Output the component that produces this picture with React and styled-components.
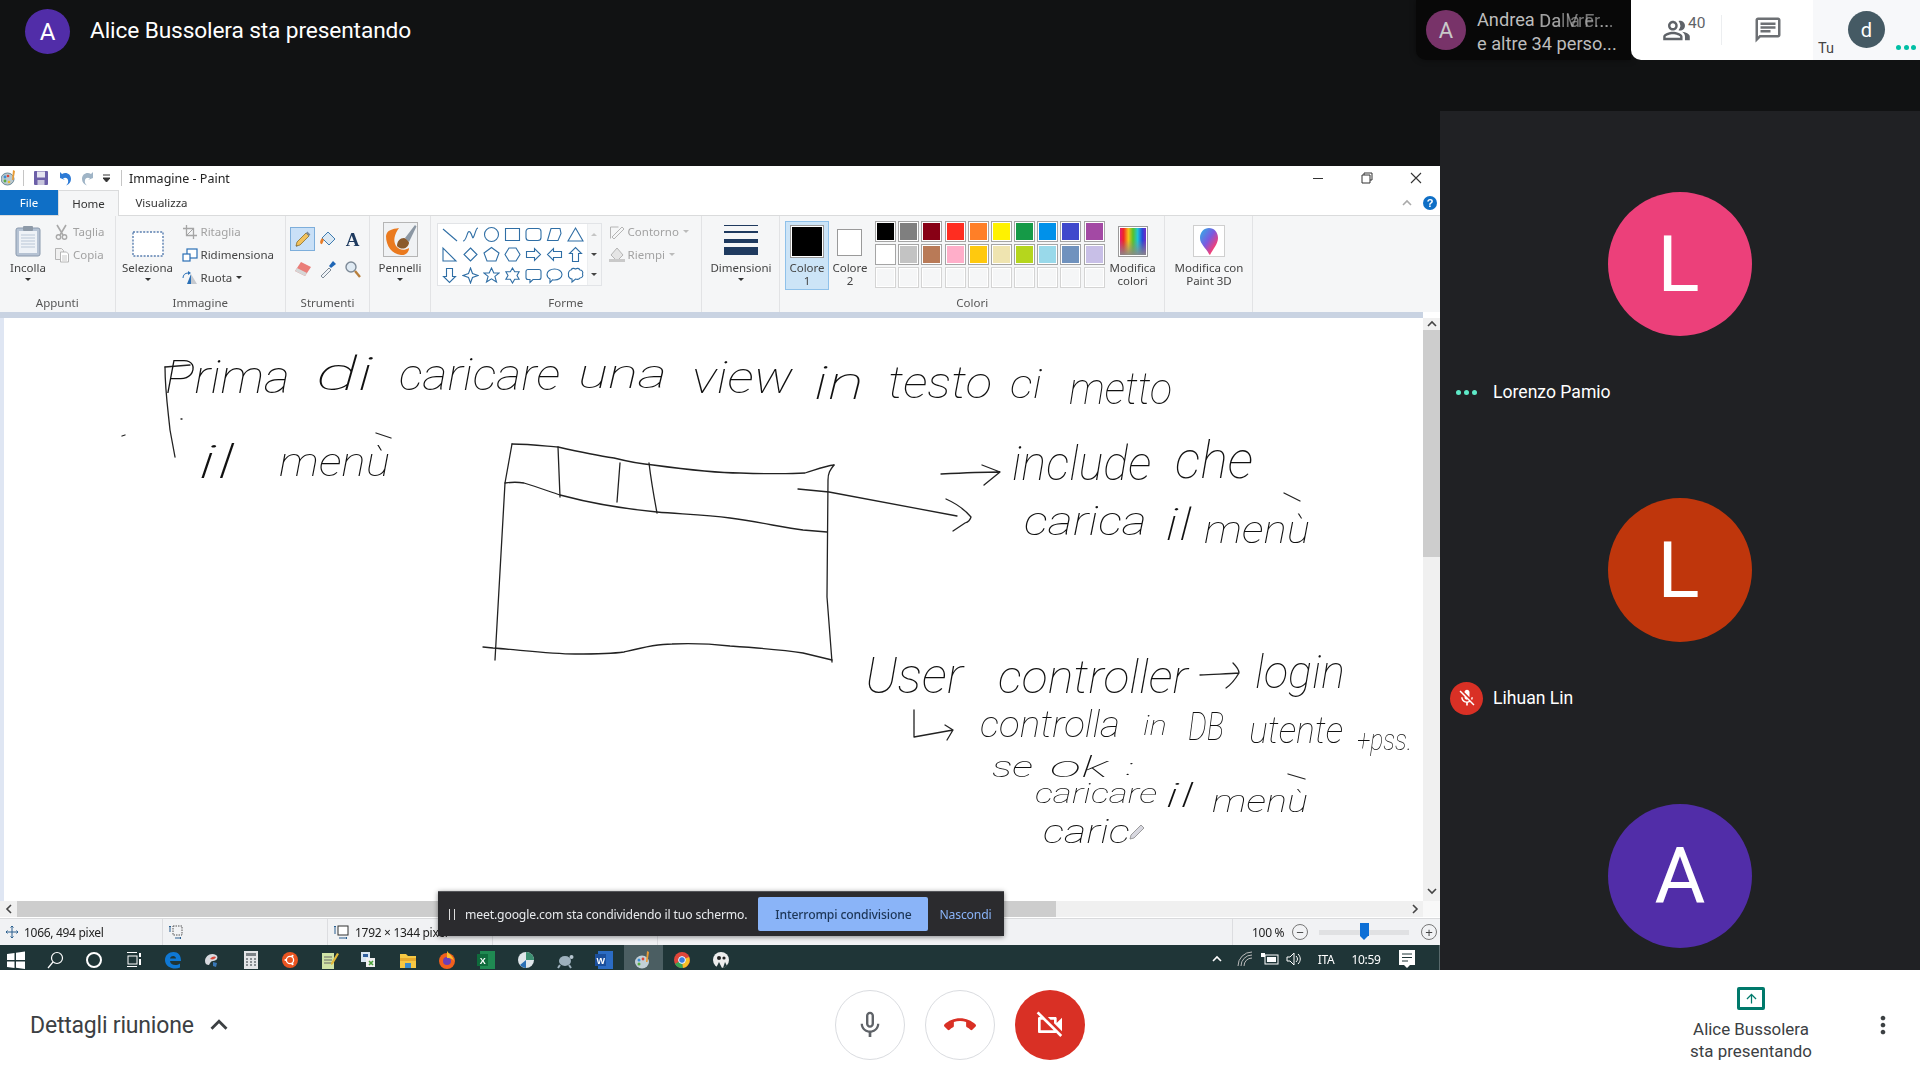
import React from "react";
import styled, { createGlobalStyle } from "styled-components";
import { MdMicNone, MdCallEnd, MdOutlineVideocamOff, MdMicOff, MdOutlinePeopleAlt, MdOutlineChat, MdExpandLess, MdMoreVert, MdArrowUpward } from "react-icons/md";

const Global = createGlobalStyle`
  html, body { margin: 0; padding: 0; background: #111213; }
  #root { width: 1920px; height: 1080px; overflow: hidden; }
  * { box-sizing: border-box; }
`;

const Shell = styled.div`
  position: relative; width: 1920px; height: 1080px; display: flex; flex-direction: column;
  font-family: Roboto, "Noto Sans", sans-serif; background: #111213;
`;
const Stage = styled.div`display: flex; height: 970px;`;
const LeftColumn = styled.div`width: 1440px; display: flex; flex-direction: column;`;
const RightColumn = styled.div`width: 480px; display: flex; flex-direction: column;`;

/* ---------- Meet top ---------- */
const PresenterBar = styled.div`height: 166px; display: flex; align-items: flex-start; gap: 20px; padding: 9px 0 0 25px; color: #fff;`;
const Avatar = styled.div`
  width: ${p => p.$size}px; height: ${p => p.$size}px; border-radius: 50%; background: ${p => p.$bg};
  color: ${p => p.$fg || "#fff"}; font-size: ${p => p.$font}px; font-family: Roboto, sans-serif;
  display: flex; align-items: center; justify-content: center; flex: none;
`;
const PresenterTitle = styled.div`font-size: 22.7px; line-height: 44px; letter-spacing: -.12px;`;
const TopSpacer = styled.div`height: 111px; background: #111213;`;
const TopOverlay = styled.div`position: absolute; top: 0; right: 0; width: 504px; height: 60px; display: flex; z-index: 5;`;
const PeoplePill = styled.div`
  width: 215px; background: #080808; border-radius: 0 0 0 10px; display: flex; gap: 11px; padding: 10px 0 0 10px;
  box-shadow: 0 0 6px rgba(0,0,0,.4);
`;
const PillLines = styled.div`font-size: 18.2px; line-height: 24px; color: #bdbdbd; margin-top: -4.5px; white-space: nowrap;`;
const GhostWrap = styled.span`position: relative; display: inline-block; width: 80px; height: 20px;`;
const Ghost = styled.span`position: absolute; left: 0; top: 3px; line-height: 24px; opacity: .6; letter-spacing: ${p => p.$sp || 0}px;`;
const ToolPanel = styled.div`flex: 1; display: flex; background: #fff; border-radius: 0 0 0 10px; overflow: hidden;`;
const PanelWhite = styled.div`width: 182px; display: flex; align-items: center; padding-left: 31px; color: #5f6368;`;
const PeopleCount = styled.span`font-size: 15.5px; margin: -14px 0 0 -3px; width: 33px;`;
const PanelDivider = styled.div`width: 1px; height: 30px; background: #eceef0;`;
const ChatSlot = styled.div`margin-left: 31px; display: flex; color: #6d7074;`;
const PanelSelf = styled.div`flex: 1; background: #f7f8fa; display: flex; padding-left: 5px;`;
const SelfLabel = styled.div`font-size: 14.5px; color: #444; align-self: flex-end; padding-bottom: 3px; width: 30px;`;
const SelfAvatarSlot = styled.div`padding-top: 11px;`;
const Dots = styled.div`display: flex; gap: ${p => p.$gap}px; align-self: ${p => p.$self || "center"}; margin: ${p => p.$m || 0};`;
const Dot = styled.i`display: block; width: ${p => p.$s}px; height: ${p => p.$s}px; border-radius: 50%; background: ${p => p.$c};`;

/* ---------- Sidebar ---------- */
const Sidebar = styled.div`flex: 1; background: #202124; overflow: hidden;`;
const Tile = styled.div`position: relative; height: 306px; display: flex; align-items: center; justify-content: center;`;
const NameTag = styled.div`
  position: absolute; left: 10px; top: 264px; height: 34px; display: flex; align-items: center;
  color: #fff; font-size: 17.6px; white-space: nowrap;
`;
const TagIcon = styled.div`width: 33px; height: 33px; margin-right: 10px; border-radius: 50%; display: flex; align-items: center; justify-content: center; background: ${p => p.$bg || "transparent"};`;
const AvatarLetter = styled.span`margin-left: -3px;`;

/* ---------- Paint ---------- */
const PaintWindow = styled.div`
  position: relative; flex: 1; display: flex; flex-direction: column; background: #fff;
  font-family: "Noto Sans", sans-serif; color: #3c3c3c; font-size: 11.5px; filter: blur(.3px);
`;
const TitleRow = styled.div`height: 24px; display: flex; align-items: center; background: #fff;`;
const TitleIcons = styled.div`display: flex; align-items: center;`;
const QuickIcon = styled.div`width: ${p => p.$w}px; display: flex; justify-content: center;`;
const TitleSep = styled.div`width: 1px; height: 16px; background: #c5c5c5;`;
const TitleText = styled.div`font-size: 12.5px; color: #222; margin-left: 7px;`;
const WinControls = styled.div`margin-left: auto; display: flex; padding-right: 0;`;
const WinBtn = styled.div`width: 49px; height: 24px; display: flex; align-items: center; justify-content: center;`;
const TabRow = styled.div`height: 25px; display: flex; align-items: stretch;`;
const FileTab = styled.div`width: 58px; background: #0f6fc6; color: #fff; display: flex; align-items: center; justify-content: center; font-size: 11.5px;`;
const Tab = styled.div`
  width: ${p => p.$w}px; display: flex; align-items: center; justify-content: center; font-size: 11.5px; color: #333;
  ${p => p.$active ? "background:#f5f6f7; border:1px solid #dadbdc; border-bottom:0; margin-bottom:-1px; position:relative;" : ""}
`;
const TabRight = styled.div`margin-left: auto; display: flex; align-items: center; gap: 11px; padding-right: 3px;`;
const HelpDot = styled.div`width: 14px; height: 14px; border-radius: 50%; background: #0f6fc6; color: #fff; font: bold 11px/14px "Liberation Sans", sans-serif; text-align: center;`;

const Ribbon = styled.div`height: 97px; display: flex; background: #f5f6f7; border-top: 1px solid #dadbdc;`;
const Group = styled.section`width: ${p => p.$w}px; flex: none; display: flex; flex-direction: column; border-right: 1px solid #e2e3e5;`;
const GroupBody = styled.div`height: 79px; display: flex; padding: ${p => p.$pad || 0}; gap: ${p => p.$gap || 0}px;`;
const GroupLabel = styled.div`height: 16px; line-height: 16px; text-align: center; color: #555; font-size: 11.5px;`;

const LargeButton = styled.div`
  width: ${p => p.$w}px; flex: none; display: flex; flex-direction: column; align-items: center; line-height: 13px; text-align: center;
  color: #444; white-space: nowrap; margin: ${p => p.$m || 0};
`;
const IconSlot = styled.div`height: 45px; padding-bottom: 4px; display: flex; align-items: flex-end; justify-content: center;`;
const Caret = styled.span`display: block; margin: 4px auto 0; width: 0; height: 0; border: 3px solid transparent; border-top: 3px solid ${p => p.$c || "#333"}; border-bottom: 0;`;
const InlineCaret = styled.span`display: inline-block; margin-left: 1px; vertical-align: middle; width: 0; height: 0; border: 3px solid transparent; border-top: 3px solid ${p => p.$c || "#333"}; border-bottom: 0;`;
const SmallColumn = styled.div`display: flex; flex-direction: column; padding-top: 4px; white-space: nowrap;`;
const SmallRow = styled.div`height: 23px; display: flex; align-items: center; gap: ${p => p.$gap || 3}px; color: ${p => p.$muted ? "#a2a2a2" : "#444"};`;
const IconCell = styled.span`width: ${p => p.$w || 17}px; display: flex; justify-content: center;`;

const ToolGrid = styled.div`display: grid; grid-template-columns: repeat(3, 25px); grid-template-rows: 24px 24px; row-gap: 6px; margin-top: 11px;`;
const ToolCell = styled.div`
  display: flex; align-items: center; justify-content: center;
  ${p => p.$on ? "background:#c9e0f7; border:1px solid #7daedb;" : ""}
`;
const Gallery = styled.div`
  margin-top: 7px; width: 165px; height: 63px; display: flex; background: #fff; border: 1px solid #e2e4e7;
`;
const ShapeGrid = styled.div`width: 149px; display: grid; grid-template-columns: repeat(7, 21px); grid-auto-rows: 20.5px; padding-left: 1px;`;
const ShapeCell = styled.div`display: flex; align-items: center; justify-content: center;`;
const GalleryScroll = styled.div`flex: 1; background: #f5f6f7; display: flex; flex-direction: column; align-items: center; justify-content: space-around; border-left: 1px solid #eceef0;`;
const ScrollCaret = styled.span`width: 0; height: 0; border: 3px solid transparent; ${p => p.$up ? "border-bottom:3px solid #c5c5c5;border-top:0;" : "border-top:3px solid #444;border-bottom:0;"}`;
const ColorButton = styled.div`
  width: ${p => p.$w}px; height: 69px; flex: none; display: flex; flex-direction: column; align-items: center; line-height: 13px; text-align: center; color: #444;
  border: 1px solid ${p => p.$on ? "#8fc1ea" : "transparent"}; background: ${p => p.$on ? "#cce4f7" : "transparent"};
`;
const ColorWell = styled.div`height: 39px; display: flex; align-items: ${p => p.$a || "center"}; padding-top: ${p => p.$pt || 0}px;`;
const ColorChip = styled.div`width: ${p => p.$w}px; height: ${p => p.$h}px; background: ${p => p.$c}; border: 1px solid #9a9a9a; ${p => p.$ring ? "outline:1px solid #fff; outline-offset:-2px;" : ""}`;
const Palette = styled.div`display: grid; grid-template-columns: repeat(10, 21px); grid-auto-rows: 21px; column-gap: 2.2px; row-gap: 2px; margin-left: 4px;`;
const Swatch = styled.div`background: ${p => p.$c}; border: 1px solid ${p => p.$empty ? "#d4d4d4" : "#a5a5a5"}; box-shadow: inset 0 0 0 1px #fff;`;
const Rainbow = styled.div`
  width: 30px; height: 31px; border: 1px solid #9a9a9a; outline: 1px solid #fff; outline-offset: -2px;
  background: linear-gradient(to bottom, transparent 45%, #8a8a8a 100%), linear-gradient(to right, #e0148c, #ef2b23, #f7c11a, #56c22a, #1fc5d6, #2747d8, #8a1fc0);
`;
const P3DBox = styled.div`width: 32px; height: 32px; background: #fff; border: 1px solid #cfcfcf; display: flex; align-items: center; justify-content: center;`;

const Bar = styled.div`height: 6px; margin-right: 17px; background: #c9d3e2; flex: none;`;
const Workspace = styled.div`height: 583px; display: flex; flex: none;`;
const CanvasWrap = styled.div`flex: 1; padding-left: 4px; background: #dfe6f3;`;
const Sheet = styled.svg`display: block; background: #fff;`;
const VScroll = styled.div`width: 17px; background: #f0f0f0; display: flex; flex-direction: column; align-items: center;`;
const VThumb = styled.div`width: 100%; height: 227px; background: #cdcdcd;`;
const ArrowBox = styled.div`width: 17px; height: ${p => p.$h || 16}px; flex: none; display: flex; align-items: center; justify-content: center; ${p => p.$end ? "margin-top:auto;" : ""}`;
const HScroll = styled.div`height: 16px; display: flex; background: #f0f0f0; margin-bottom: 1px; flex: none;`;
const HThumb = styled.div`width: 1039px; background: #cdcdcd;`;
const HEnd = styled.div`margin-left: auto; display: flex;`;
const HCorner = styled.div`width: 17px; background: #f8f8f8;`;
const StatusBar = styled.div`height: 27px; display: flex; background: #f1f2f4; border-top: 1px solid #d9dadc; font-size: 12px; color: #222; letter-spacing: -.3px; flex: none;`;
const StatusCell = styled.div`width: ${p => p.$w}px; display: flex; align-items: center; gap: 6px; padding-left: 6px; border-right: 1px solid #dcdde0; white-space: nowrap;`;
const ZoomCell = styled.div`flex: 1; display: flex; align-items: center; padding-left: 19px;`;
const ZoomLabel = styled.div`width: 40px; white-space: nowrap;`;
const RoundBtn = styled.div`width: 16px; height: 16px; flex: none; border: 1px solid #777; border-radius: 50%; display: flex; align-items: center; justify-content: center; color: #444; font: 13px/13px "Liberation Sans", sans-serif;`;
const Slider = styled.div`position: relative; width: 90px; height: 5px; background: #e0e1e3; margin: 0 12px 0 11px;`;
const SliderThumb = styled.div`position: absolute; left: 41px; top: -7px; width: 9px; height: 13px; background: #0d6fd6; &::after { content: ""; position: absolute; left: 0; top: 13px; border: 4.5px solid transparent; border-top: 4px solid #0d6fd6; border-bottom: 0; }`;
const Taskbar = styled.div`height: 25px; flex: none; display: flex; background: #1f3537; color: #fff; overflow: hidden; font-size: 12px; letter-spacing: -.3px; border-right: 1px solid #58696b;`;
const TaskList = styled.div`display: flex; margin-left: -3.5px;`;
const TaskCell = styled.div`width: 39.2px; display: flex; justify-content: center; padding-top: 6px; background: ${p => p.$on ? "#4b5e62" : "transparent"};`;
const Tray = styled.div`margin-left: auto; display: flex; padding-right: 11px;`;
const TrayCell = styled.div`width: ${p => p.$w}px; display: flex; justify-content: center; align-items: center; padding-top: 3px;`;

const Banner = styled.div`
  position: absolute; left: 438px; top: 725px; width: 566px; height: 45px; background: #2b2b2e; display: flex; align-items: center;
  color: #e8eaed; font-size: 12.2px; letter-spacing: -.15px; box-shadow: 0 1px 5px rgba(0,0,0,.45); border-top: 1px solid #55565a; white-space: nowrap;
  padding-left: 11px;
`;
const PauseBars = styled.span`width: 6px; height: 11px; border-left: 1.5px solid #ddd; border-right: 1.5px solid #ddd; margin-right: 10px;`;
const StopButton = styled.div`width: 170px; height: 34px; margin-left: 11px; background: #8ab4f8; color: #1d3657; border-radius: 2px; display: flex; align-items: center; justify-content: center; font-weight: 500;`;
const HideLink = styled.div`margin-left: 11px; color: #8ab4f8;`;

/* ---------- Meet bottom ---------- */
const BottomBar = styled.div`height: 110px; background: #fff; display: flex; color: #3c4043;`;
const Details = styled.div`width: 835px; padding-left: 30px; display: flex; align-items: center; gap: 8px; font-size: 23px; letter-spacing: -.2px; color: #3c4043;`;
const Controls = styled.div`display: flex; gap: 20px; padding-top: 20px;`;
const RoundControl = styled.div`
  width: 70px; height: 70px; border-radius: 50%; display: flex; align-items: center; justify-content: center;
  background: ${p => p.$bg || "#fff"}; border: ${p => p.$bg ? "0" : "1px solid #dadce0"}; color: ${p => p.$c};
`;
const PresentBlock = styled.div`width: 140px; margin-left: 596px; padding-top: 17px; display: flex; flex-direction: column; align-items: center; text-align: center; font-size: 16.9px; line-height: 22px; white-space: nowrap;`;
const PresentIcon = styled.div`width: 28px; height: 23px; border: 3px solid #00796b; border-radius: 2px; color: #00796b; display: flex; align-items: center; justify-content: center; margin-bottom: 8px;`;
const MenuSlot = styled.div`margin-left: 48px; display: flex; align-items: center; color: #3c4043;`;

/* ---------- Drawing data ---------- */
const strokes = [
  "M165 367L190 365", "M165 367C165 390 168 410 170 430L175 457", "M122 436l3 -1", "M181 419h1",
  "M512 444C530 444 545 446 558 447C580 452 600 456 614 458C630 462 640 464 653 465C690 470 715 473 740 473C770 474 790 474 805 473C815 470 825 466 834 465",
  "M834 465C830 470 828 473 828 480L827 597L832 662",
  "M512 444L505 483L495 660",
  "M505 483C512 482 518 482 524 483C537 487 548 491 560 495C590 503 625 509 657 512C680 514 705 515 730 518C760 522 785 528 803 530L827 532",
  "M558 447L560 497", "M620 463L617 502", "M649 463C651 480 654 497 657 513",
  "M483 647L493 648C520 650 550 654 575 654C595 654 610 654 624 652C640 648 655 644 672 644C695 643 712 644 730 646C760 648 785 650 803 653L832 660",
  "M798 489L829 492L957 516", "M946 499C955 503 965 510 971 517C970 521 968 522 965 523L953 531",
  "M941 474C960 473 980 472 1000 472M982 465L1000 472L984 485",
  "M376 433L391 438", "M1284 493L1300 501", "M1288 774L1305 779",
  "M1200 675C1215 674 1228 674 1239 673M1233 663C1237 667 1239 670 1239 673C1236 678 1232 684 1226 688",
  "M914 710L914 737L953 730M945 725L953 730L947 740",
];
const W = (t, a, b, y, s) => ({ t, a, b, y, s });
const words = [
  W("Prima", 165, 290, 393, 46), W("di", 316, 373, 390, 46), W("caricare", 399, 560, 390, 44), W("una", 578, 667, 388, 40),
  W("view", 692, 793, 393, 44), W("in", 814, 864, 399, 46), W("testo", 888, 992, 398, 44), W("ci", 1010, 1042, 398, 40), W("metto", 1069, 1172, 404, 44),
  W("il", 198, 235, 478, 46), W("menù", 279, 390, 476, 40),
  W("include", 1012, 1151, 480, 48), W("che", 1175, 1253, 478, 52),
  W("carica", 1024, 1147, 535, 40), W("il", 1165, 1192, 540, 44), W("menù", 1204, 1310, 543, 38),
  W("User", 865, 963, 693, 50), W("controller", 998, 1188, 693, 46), W("login", 1255, 1345, 688, 46),
  W("controlla", 980, 1120, 737, 36), W("in", 1143, 1167, 735, 28), W("DB", 1188, 1224, 740, 38), W("utente", 1249, 1343, 743, 36), W("+pss.", 1357, 1412, 750, 30),
  W("se", 992, 1033, 777, 30), W("ok", 1050, 1108, 777, 30), W(":", 1126, 1134, 775, 22),
  W("caricare", 1035, 1157, 803, 28), W("il", 1165, 1194, 807, 34), W("menù", 1212, 1308, 812, 32),
  W("caric", 1043, 1130, 843, 34),
];
const HandWord = styled.text`font-family: Roboto, sans-serif; font-style: italic; font-weight: 100; fill: #111;`;

const shapes = [
  "M2 3L16 15", "M1 15C5 15 5 3 8 6S10 15 12 10 14 2 16 2", "M1.5 8.5a7 7 0 1 0 14 0a7 7 0 1 0-14 0", "M1.5 2.5h14v12h-14z",
  "M4 2.5h9a3 3 0 0 1 3 3v6a3 3 0 0 1-3 3H4a3 3 0 0 1-3-3v-6a3 3 0 0 1 3-3z", "M5 2.5h9l1 5-3 7H1.5z", "M8.5 2L16 15H1z",
  "M2 2v13h13z", "M8.5 2L15 8.5 8.5 15 2 8.5z", "M8.5 1.5L16 7l-3 8H4L1 7z", "M5 2h7l4 6.5-4 6.5H5L1 8.5z",
  "M1.5 5.5h8v-3l6 6-6 6v-3h-8z", "M15.5 5.5h-8v-3l-6 6 6 6v-3h8z", "M5.5 15.5v-8h-3l6-6 6 6h-3v8z",
  "M5.5 1.5v8h-3l6 6 6-6h-3v-8z", "M8.5 1L10.5 6.5 16 8.5 10.5 10.5 8.5 16 6.5 10.5 1 8.5 6.5 6.5z",
  "M8.5 1l2.3 5h5.4l-4.3 3.4 1.6 5.6-5-3.2-5 3.2 1.6-5.6L.8 6h5.4z", "M8.5 1l2.2 3.8h4.4L13 8.5l2.1 3.7h-4.4L8.5 16l-2.2-3.8H1.9L4 8.5 1.9 4.8h4.4z",
  "M3 2.5h11a2 2 0 0 1 2 2v6a2 2 0 0 1-2 2H8l-3 3v-3H3a2 2 0 0 1-2-2v-6a2 2 0 0 1 2-2z",
  "M8.5 2c4 0 7.5 2.2 7.5 5.5S12.5 13 8.5 13c-.7 0-1.4 0-2-.2L4 15.5v-3.6C2.2 11 1 9.4 1 7.5 1 4.2 4.5 2 8.5 2z",
  "M4 3c1-2 3-2 4.5-1 1.5-1 3.5-1 4.5 1 2 0 3.5 2 2.5 4 1 2-.5 4-2.5 4-1 1.5-3 1.5-4.5 1L5 15v-3C3 12 1 10 1.5 7.5 1 5.5 2.5 3 4 3z",
];
const row1 = ["#000000", "#7f7f7f", "#880015", "#ff2d20", "#ff7f27", "#fff200", "#159a47", "#0091ea", "#3f48cc", "#a349a4"];
const row2 = ["#ffffff", "#c3c3c3", "#b97a57", "#ffaec9", "#ffc90e", "#efe4b0", "#b5d61d", "#99d9ea", "#7092be", "#c8bfe7"];
const swatches = [...row1, ...row2, ...Array(10).fill("#f5f6f7")];

/* ---------- Small drawn icons ---------- */
const S = ({ w = 16, h = 16, vb, children }) => <svg width={w} height={h} viewBox={vb || `0 0 ${w} ${h}`} style={{ display: "block", flex: "none" }}>{children}</svg>;

const PaintLogo = () => <S w={16} h={18}><ellipse cx="6.5" cy="10" rx="6.5" ry="6" fill="#b9c8cf" stroke="#6d8a98" /><circle cx="4" cy="8" r="1.4" fill="#3a8fd6" /><circle cx="7" cy="7" r="1.3" fill="#d9463a" /><circle cx="4" cy="12" r="1.4" fill="#5aae45" /><circle cx="8" cy="13" r="1.3" fill="#e8b82e" /><path d="M12 1l2 1-1.5 9H11z" fill="#e89b35" /></S>;
const SaveIcon = () => <S><rect x="1" y="1" width="14" height="14" rx="1" fill="#6c5fa8" /><rect x="4" y="1.5" width="8" height="6" fill="#e5e4f0" /><rect x="4.5" y="10" width="7" height="5" fill="#c8c6dc" /></S>;
const UndoIcon = ({ c = "#2c7ad6" }) => <S w={15} h={15}><path d="M2 7V1l2 2c4-2.5 9 0 9 5 0 3-2 5.5-5 6.5 2-1.5 2.5-3.5 2-5.5-.7-2.2-3-3-5-1.5L7 9z" fill={c} /></S>;
const RedoIcon = () => <S w={15} h={15}><path d="M13 7V1l-2 2C7 .5 2 3 2 8c0 3 2 5.5 5 6.5-2-1.5-2.5-3.5-2-5.5.7-2.2 3-3 5-1.5L8 9z" fill="#9fb4c6" /></S>;
const QuickDrop = () => <S w={7} h={8}><path d="M0 1h7M0 4h7l-3.5 4z" stroke="#333" strokeWidth="1" fill="#333" /></S>;
const Paste = () => <S w={26} h={32}><rect x="1" y="3" width="24" height="28" rx="2" fill="#b5c2d3" stroke="#8a99ad" /><rect x="4" y="6" width="18" height="22" fill="#eef2f7" /><path d="M6 10h14M6 13h14M6 16h14M6 19h14M6 22h14" stroke="#b9c6d6" /><rect x="8" y="1" width="10" height="5" rx="1" fill="#8e9aa8" /></S>;
const Scissors = () => <S w={13} h={16}><path d="M2 1l6 10M11 1L5 11" stroke="#a9a9a9" strokeWidth="1.6" /><circle cx="3.5" cy="13" r="2.2" fill="none" stroke="#a9a9a9" strokeWidth="1.4" /><circle cx="9.5" cy="13" r="2.2" fill="none" stroke="#a9a9a9" strokeWidth="1.4" /></S>;
const CopyI = () => <S w={16} h={16}><path d="M1.5 1.5h6l2 2v9h-8z" fill="#f0f0f0" stroke="#b5b5b5" /><path d="M6.5 5h6l2 2v8h-8z" fill="#fff" stroke="#b5b5b5" /><path d="M8 9h5M8 11h5M8 13h5" stroke="#c9c9c9" /></S>;
const SelectI = () => <S w={32} h={26}><rect x="1" y="1" width="30" height="24" fill="#fff" stroke="#5a7fb0" strokeWidth="1.4" strokeDasharray="2 1.4" /></S>;
const CropI = () => <S w={14} h={14}><path d="M3.5 0v10.5H14M0 3.5h10.5V14" fill="none" stroke="#a5a5a5" strokeWidth="1.3" /><path d="M3.5 10.5L11 3" stroke="#a5a5a5" /></S>;
const ResizeI = () => <S w={16} h={14}><rect x="5" y="1" width="10" height="9" fill="#fff" stroke="#2a6fb5" strokeWidth="1.2" /><rect x="1" y="6" width="7" height="7" fill="#fff" stroke="#2a6fb5" strokeWidth="1.2" /></S>;
const RotateI = () => <S w={16} h={14}><path d="M5 13L9 3v10z" fill="#2a6fb5" /><path d="M9 3l6 10H9z" fill="#c5c9cf" /><path d="M1 7c0-3 2-5 5-5" stroke="#2a6fb5" fill="none" /><path d="M6 0l3 2-3 2z" fill="#2a6fb5" /></S>;
const PencilI = ({ op = 1 }) => <S w={18} h={18}><g opacity={op}><path d="M3 12L12 3l3 3-9 9-4 1z" fill="#f1c15c" stroke="#8a6d2b" strokeWidth=".8" /><path d="M12 3l1.4-1.4 3 3L15 6z" fill="#7d8a97" /><path d="M3 15.5l-.8 1 1.2-.3z" fill="#222" /></g></S>;
const BucketI = () => <S w={18} h={18}><path d="M9 2l7 7-6 6-7-7z" fill="#dbe8f3" stroke="#3f7cb0" /><path d="M3 8c-2 2-2.5 5-1 6s2-3 3-4z" fill="#e87d28" /></S>;
const LetterA = styled.span`font: bold 19px/19px "Liberation Serif", serif; color: #1e3a5f;`;
const EraserI = () => <S w={18} h={16}><path d="M7 1l10 5-6 9-10-5z" fill="#ea7d78" /><path d="M1 10l10 5 2-3-10-5z" fill="#d6d6d6" /></S>;
const PickerI = () => <S w={18} h={18}><path d="M2 16l8-8 2 2-8 8z" fill="#eef2f6" stroke="#7e8a96" /><path d="M10 6l4-5 3 3-5 4z" fill="#1f66b5" /></S>;
const Magnifier = () => <S w={18} h={18}><circle cx="7" cy="7" r="5" fill="#dfeaf3" stroke="#7d8a97" strokeWidth="1.4" /><path d="M11 11l5 6" stroke="#b87f3c" strokeWidth="2.4" /></S>;
const BrushI = () => <S w={35} h={35}><rect x=".5" y=".5" width="34" height="34" fill="#f0f2f4" stroke="#b5b5b5" /><path d="M3 14c0 10 6 18 15 19 5 .5 8-3 8-7-5 3-10 2-13-2-3-5-2-11 3-18C9 7 4 8 3 14z" fill="#ea7a1f" /><path d="M14 24c0-5 3-8 7-8 2 0 5 3 5 5-1 5-7 8-12 3z" fill="#8a5a2c" /><path d="M22 16L32 3l1.5 1.5L26 20z" fill="#8b97a3" /></S>;
const OutlineI = () => <S w={16} h={16}><path d="M1.5 14.5V3h8M3 13L13 3l2 2L5 15z" fill="none" stroke="#b5b5b5" /></S>;
const FillI = () => <S w={16} h={16}><path d="M8 1l6 7-6 6-6-6z" fill="#e5e5e5" stroke="#b5b5b5" /><rect x="0" y="12" width="16" height="3" fill="#c9c9c9" /></S>;
const SizeLines = () => <S w={34} h={32}><rect y="0" width="34" height="1" fill="#1f3a5f" /><rect y="6" width="34" height="2" fill="#1f3a5f" /><rect y="14" width="34" height="4" fill="#1f3a5f" /><rect y="22" width="34" height="8" fill="#1f3a5f" /></S>;
const Drop3D = () => <S w={18} h={27}><defs><linearGradient id="drop" x1="0" y1="0" x2="1" y2="1"><stop offset="0" stopColor="#28b6e8" /><stop offset=".45" stopColor="#7a5ae0" /><stop offset=".75" stopColor="#ef3f7b" /><stop offset="1" stopColor="#f79a1e" /></linearGradient></defs><path d="M9 0c5 0 9 4 9 10 0 6-5 11-8 17-1-1-1-1-1-1C6 20 0 16 0 10 0 4 4 0 9 0z" fill="url(#drop)" /></S>;
const ChevronI = ({ d, c = "#444" }) => {
  const p = { up: "M1 7L5 3l4 4", down: "M1 3l4 4 4-4", left: "M7 1L3 5l4 4", right: "M3 1l4 4-4 4" }[d];
  return <S w={10} h={10}><path d={p} fill="none" stroke={c} strokeWidth="1.6" /></S>;
};
const MoveI = () => <S w={12} h={12}><path d="M6 0v12M0 6h12M4.5 1.5L6 0l1.5 1.5M4.5 10.5L6 12l1.5-1.5M1.5 4.5L0 6l1.5 1.5M10.5 4.5L12 6l-1.5 1.5" fill="none" stroke="#2a5f8f" /></S>;
const SelDimI = () => <S w={14} h={14}><path d="M4 1h9v9H4z" fill="none" stroke="#555" strokeDasharray="1.5 1" /><path d="M1 1v6M0 2l1-1 1 1M6 13h6M11 12l1 1-1 1" fill="none" stroke="#2a5f8f" /></S>;
const ImgDimI = () => <S w={15} h={14}><rect x="4" y="1" width="10" height="9" fill="#fff" stroke="#333" /><path d="M1 1v8M0 2l1-1 1 1M5 13h8M12 12l1 1-1 1" fill="none" stroke="#2a5f8f" /></S>;

const taskIcons = [
  <S w={18} h={18} key="win"><path d="M0 3l7.5-1v7H0zM9 1.8L18 .5V9H9zM0 10.5h7.5V17L0 16zM9 10.5h9V18l-9-1.2z" fill="#fff" /></S>,
  <S w={18} h={18} key="search"><circle cx="11" cy="7" r="5.5" fill="none" stroke="#fff" strokeWidth="1.2" /><path d="M7 11l-5 6" stroke="#fff" strokeWidth="1.2" /></S>,
  <S w={18} h={18} key="cortana"><circle cx="9" cy="9" r="7" fill="none" stroke="#fff" strokeWidth="2" /></S>,
  <S w={18} h={18} key="tv"><path d="M2 1h10v1H2zM2 15h10v1H2z" fill="#fff" /><rect x="3" y="5" width="9" height="8" fill="none" stroke="#fff" /><rect x="14" y="2" width="2" height="4" fill="#fff" /><rect x="14" y="8" width="2" height="6" fill="#fff" /></S>,
  <S w={18} h={18} key="edge"><path d="M1 9c0-5 4-8 8.5-8C14 1 17 4 17 10H6c.3 4 6 5.5 10 2.5v4C11 19 1 17 1 9zM6 7.5h6C12 4.5 7 4 6 7.5z" fill="#0f78d4" /></S>,
  <S w={18} h={18} key="sn"><path d="M2 10c0-5 6-9 11-6 3 2 1 6-3 6-2 0-3 2-4 4-2 0-4-1-4-4z" fill="#d8dadf" /><path d="M7 8c2-3 5-3 6-2-1 2-3 3-6 2z" fill="#d8483a" /><path d="M10 11l4 1-1 4-3-1z" fill="#3a78b8" /></S>,
  <S w={14} h={18} key="calc"><rect x="0" y="0" width="14" height="18" fill="#e3e5e7" /><rect x="2" y="2" width="10" height="3" fill="#7c8286" /><path d="M2 8h2M6 8h2M10 8h2M2 11h2M6 11h2M10 11h2M2 14h2M6 14h2M10 14h2" stroke="#6a7074" strokeWidth="1.4" /></S>,
  <S w={18} h={18} key="ub"><circle cx="9" cy="9" r="8" fill="#e95420" /><circle cx="9" cy="9" r="3.6" fill="none" stroke="#fff" strokeWidth="1.3" /><circle cx="4.5" cy="9" r="1.1" fill="#fff" /><circle cx="11.5" cy="4.8" r="1.1" fill="#fff" /><circle cx="11.5" cy="13.2" r="1.1" fill="#fff" /></S>,
  <S w={18} h={18} key="note"><rect x="1" y="2" width="12" height="16" fill="#cfe3a6" /><path d="M3 6h8M3 9h8M3 12h8" stroke="#666" /><path d="M10 12L16 2l2 1-6 10-2 1z" fill="#e0b83a" /></S>,
  <S w={18} h={18} key="rd"><rect x="1" y="1" width="9" height="10" fill="#d8e6f2" /><rect x="3" y="3" width="5" height="3" fill="#2f5f9e" /><rect x="6" y="7" width="9" height="9" fill="#f0f0f0" /><path d="M9 10l4 4M13 10l-4 4" stroke="#4aa03a" strokeWidth="1.6" /></S>,
  <S w={18} h={18} key="fold"><path d="M1 3h6l2 2h8v12H1z" fill="#f6c743" /><rect x="1" y="7" width="16" height="3" fill="#e7a92d" /><rect x="6" y="12" width="6" height="5" fill="#3a8bd0" /></S>,
  <S w={18} h={18} key="ff"><circle cx="9" cy="10" r="8" fill="#f2601d" /><circle cx="9" cy="10" r="4" fill="#6b3fb8" /><path d="M9 0c2 3 6 5 7 10-2-3-5-3-7-3z" fill="#fcbc2c" /></S>,
  <S w={18} h={18} key="xl"><rect x="3" y="0" width="15" height="18" fill="#1f8a52" /><rect x="0" y="3" width="11" height="12" fill="#0f6b3c" /><text x="5.5" y="12.5" fontSize="9" fontWeight="700" fill="#fff" textAnchor="middle" fontFamily="Liberation Sans">X</text></S>,
  <S w={18} h={18} key="snip"><circle cx="9" cy="9" r="8" fill="#dfe6ea" /><path d="M9 1c5 0 8 4 8 8H9z" fill="#3d8f72" /><path d="M9 9L3 14c3 3 6 3 6 3z" fill="#2a6fb5" /></S>,
  <S w={18} h={18} key="turtle"><ellipse cx="9" cy="10" rx="6" ry="5" fill="#9eb1bd" /><circle cx="15.5" cy="6" r="2" fill="#b6c5cf" /><path d="M4 14l-2 3M13 14l2 3" stroke="#9eb1bd" strokeWidth="2" /></S>,
  <S w={18} h={18} key="word"><rect x="3" y="0" width="15" height="18" fill="#2b6cc4" /><rect x="0" y="3" width="11" height="12" fill="#1b4f9c" /><text x="5.5" y="12.5" fontSize="9" fontWeight="700" fill="#fff" textAnchor="middle" fontFamily="Liberation Sans">W</text></S>,
  <S w={18} h={18} key="paint"><ellipse cx="8" cy="11" rx="7" ry="6.5" fill="#c2d0d8" /><circle cx="5" cy="9" r="1.5" fill="#3a8fd6" /><circle cx="9" cy="8" r="1.4" fill="#d9463a" /><circle cx="5" cy="13" r="1.5" fill="#5aae45" /><path d="M13 0l2 1-1.5 10H12z" fill="#e89b35" /></S>,
  <S w={18} h={18} key="chrome"><circle cx="9" cy="9" r="8" fill="#e0463a" /><path d="M9 9L2 13a8 8 0 0 0 8 4z" fill="#3aa655" /><path d="M9 9l7-3a8 8 0 0 1-6 11z" fill="#f6c026" /><circle cx="9" cy="9" r="3.4" fill="#3a7de0" stroke="#fff" /></S>,
  <S w={18} h={18} key="gimp"><circle cx="9" cy="9" r="8" fill="#ededed" /><circle cx="7" cy="7" r="2" fill="#222" /><circle cx="12" cy="7" r="1.6" fill="#222" /><path d="M4 17l3-6 3 6zM11 17l2-6 2 4z" fill="#1f3537" /></S>,
];

const StrokePath = ({ d }) => <path d={d} fill="none" stroke="#222" strokeWidth="1.3" strokeLinecap="round" strokeLinejoin="round" />;

export default function App() {
  return (
    <Shell>
      <Global />
      <Stage>
        <LeftColumn>
          <PresenterBar>
            <Avatar $size={45} $bg="#512da8" $font={24}>A</Avatar>
            <PresenterTitle>Alice Bussolera sta presentando</PresenterTitle>
          </PresenterBar>
          <PaintWindow>
            <TitleRow>
              <TitleIcons>
                <QuickIcon $w={18}><PaintLogo /></QuickIcon>
                <QuickIcon $w={5} />
                <TitleSep />
                <QuickIcon $w={34}><SaveIcon /></QuickIcon>
                <QuickIcon $w={14}><UndoIcon /></QuickIcon>
                <QuickIcon $w={30}><RedoIcon /></QuickIcon>
                <QuickIcon $w={8}><QuickDrop /></QuickIcon>
                <QuickIcon $w={11} />
                <TitleSep />
              </TitleIcons>
              <TitleText>Immagine - Paint</TitleText>
              <WinControls>
                <WinBtn><S w={12} h={12}><path d="M1 6.5h10" stroke="#333" strokeWidth="1" /></S></WinBtn>
                <WinBtn><S w={12} h={12}><path d="M3 3V1h8v7H9M1 3h8v8H1z" fill="none" stroke="#333" /></S></WinBtn>
                <WinBtn><S w={12} h={12}><path d="M1 1l10 10M11 1L1 11" stroke="#333" strokeWidth="1.1" /></S></WinBtn>
              </WinControls>
            </TitleRow>
            <TabRow>
              <FileTab>File</FileTab>
              <Tab $w={61} $active>Home</Tab>
              <Tab $w={85}>Visualizza</Tab>
              <TabRight>
                <ChevronI d="up" c="#aaa" />
                <HelpDot>?</HelpDot>
              </TabRight>
            </TabRow>
            <Ribbon>
              <Group $w={115.5}>
                <GroupBody $pad="0 0 0 3px">
                  <LargeButton $w={50}>
                    <IconSlot><Paste /></IconSlot>Incolla<Caret />
                  </LargeButton>
                  <SmallColumn>
                    <SmallRow $muted><IconCell><Scissors /></IconCell>Taglia</SmallRow>
                    <SmallRow $muted><IconCell><CopyI /></IconCell>Copia</SmallRow>
                  </SmallColumn>
                </GroupBody>
                <GroupLabel>Appunti</GroupLabel>
              </Group>
              <Group $w={170.5}>
                <GroupBody $pad="0 0 0 6px" $gap={8}>
                  <LargeButton $w={52}>
                    <IconSlot><SelectI /></IconSlot>Seleziona<Caret />
                  </LargeButton>
                  <SmallColumn>
                    <SmallRow $muted><IconCell $w={16}><CropI /></IconCell>Ritaglia</SmallRow>
                    <SmallRow><IconCell $w={16}><ResizeI /></IconCell>Ridimensiona</SmallRow>
                    <SmallRow><IconCell $w={16}><RotateI /></IconCell>Ruota<InlineCaret /></SmallRow>
                  </SmallColumn>
                </GroupBody>
                <GroupLabel>Immagine</GroupLabel>
              </Group>
              <Group $w={84}>
                <GroupBody $pad="0 0 0 4px">
                  <ToolGrid>
                    <ToolCell $on><PencilI /></ToolCell>
                    <ToolCell><BucketI /></ToolCell>
                    <ToolCell><LetterA>A</LetterA></ToolCell>
                    <ToolCell><EraserI /></ToolCell>
                    <ToolCell><PickerI /></ToolCell>
                    <ToolCell><Magnifier /></ToolCell>
                  </ToolGrid>
                </GroupBody>
                <GroupLabel>Strumenti</GroupLabel>
              </Group>
              <Group $w={60.6}>
                <GroupBody>
                  <LargeButton $w={60}>
                    <IconSlot><BrushI /></IconSlot>Pennelli<Caret />
                  </LargeButton>
                </GroupBody>
                <GroupLabel />
              </Group>
              <Group $w={271.4}>
                <GroupBody $pad="0 0 0 6px" $gap={7}>
                  <Gallery>
                    <ShapeGrid>
                      {shapes.map((d, i) => (
                        <ShapeCell key={i}><S w={17} h={17}><path d={d} fill="none" stroke="#2f6ea5" strokeWidth="1.1" /></S></ShapeCell>
                      ))}
                    </ShapeGrid>
                    <GalleryScroll>
                      <ScrollCaret $up />
                      <ScrollCaret />
                      <ScrollCaret />
                    </GalleryScroll>
                  </Gallery>
                  <SmallColumn>
                    <SmallRow $muted><OutlineI />Contorno<InlineCaret $c="#bbb" /></SmallRow>
                    <SmallRow $muted><FillI />Riempi<InlineCaret $c="#bbb" /></SmallRow>
                  </SmallColumn>
                </GroupBody>
                <GroupLabel>Forme</GroupLabel>
              </Group>
              <Group $w={78}>
                <GroupBody>
                  <LargeButton $w={78}>
                    <IconSlot><SizeLines /></IconSlot>Dimensioni<Caret />
                  </LargeButton>
                </GroupBody>
                <GroupLabel />
              </Group>
              <Group $w={385.5}>
                <GroupBody $pad="5px 0 0 5px">
                  <ColorButton $w={44} $on>
                    <ColorWell $pt={3} $a="flex-start"><ColorChip $w={34} $h={33} $c="#000" $ring /></ColorWell>
                    Colore<br />1
                  </ColorButton>
                  <ColorButton $w={42}>
                    <ColorWell $pt={1}><ColorChip $w={25} $h={27} $c="#fff" /></ColorWell>
                    Colore<br />2
                  </ColorButton>
                  <Palette>
                    {swatches.map((c, i) => <Swatch key={i} $c={c} $empty={i >= 20} />)}
                  </Palette>
                  <LargeButton $w={50} $m="-5px 0 0 3px">
                    <IconSlot><Rainbow /></IconSlot>Modifica<br />colori
                  </LargeButton>
                </GroupBody>
                <GroupLabel>Colori</GroupLabel>
              </Group>
              <Group $w={87.5}>
                <GroupBody>
                  <LargeButton $w={87}>
                    <IconSlot><P3DBox><Drop3D /></P3DBox></IconSlot>Modifica con<br />Paint 3D
                  </LargeButton>
                </GroupBody>
                <GroupLabel />
              </Group>
            </Ribbon>
            <Bar />
            <Workspace>
              <CanvasWrap>
                <Sheet width="1419" height="583" viewBox="4 318 1419 583">
                  {strokes.map((d, i) => <StrokePath key={i} d={d} />)}
                  {words.map((w, i) => (
                    <HandWord key={i} x={w.a} y={w.y} fontSize={w.s} textLength={w.b - w.a} lengthAdjust="spacingAndGlyphs">{w.t}</HandWord>
                  ))}
                  <g transform="translate(1130 823)"><path d="M1 12L11 2l3 3L4 15l-4 1z" fill="#d8d8e0" stroke="#888" strokeWidth=".8" /></g>
                </Sheet>
              </CanvasWrap>
              <VScroll>
                <ArrowBox $h={12}><ChevronI d="up" /></ArrowBox>
                <VThumb />
                <ArrowBox $h={20} $end><ChevronI d="down" /></ArrowBox>
              </VScroll>
            </Workspace>
            <HScroll>
              <ArrowBox><ChevronI d="left" /></ArrowBox>
              <HThumb />
              <HEnd>
                <ArrowBox><ChevronI d="right" /></ArrowBox>
                <HCorner />
              </HEnd>
            </HScroll>
            <StatusBar>
              <StatusCell $w={163}><MoveI />1066, 494 pixel</StatusCell>
              <StatusCell $w={165}><SelDimI /></StatusCell>
              <StatusCell $w={165}><ImgDimI />1792 × 1344 pixel</StatusCell>
              <StatusCell $w={165} />
              <StatusCell $w={575} />
              <ZoomCell>
                <ZoomLabel>100 %</ZoomLabel>
                <RoundBtn>−</RoundBtn>
                <Slider><SliderThumb /></Slider>
                <RoundBtn>+</RoundBtn>
              </ZoomCell>
            </StatusBar>
            <Taskbar>
              <TaskList>
                {taskIcons.map((ic, i) => <TaskCell key={i} $on={i === 16}>{ic}</TaskCell>)}
              </TaskList>
              <Tray>
                <TrayCell $w={28}><ChevronI d="up" c="#fff" /></TrayCell>
                <TrayCell $w={27}><S w={16} h={16}><path d="M1 15a14 14 0 0 1 14-14M4 15a11 11 0 0 1 11-11M7 15a8 8 0 0 1 8-8" fill="none" stroke="#bbb" /></S></TrayCell>
                <TrayCell $w={24}><S w={18} h={12}><rect x="4" y="2" width="13" height="9" fill="none" stroke="#fff" /><rect x="6" y="4" width="9" height="5" fill="#fff" /><rect x="0" y="0" width="4" height="4" fill="#fff" /></S></TrayCell>
                <TrayCell $w={24}><S w={16} h={14}><path d="M1 5h3l4-4v12l-4-4H1zM10 4c2 2 2 4 0 6M12 2c3 3 3 7 0 10" fill="none" stroke="#fff" /></S></TrayCell>
                <TrayCell $w={40}>ITA</TrayCell>
                <TrayCell $w={40}>10:59</TrayCell>
                <TrayCell $w={42}><S w={16} h={19}><path d="M0 0h16v15h-5l-3 3-3-3H0z" fill="#fff" /><path d="M3 4h10M3 7.5h10M3 11h6" stroke="#1f3537" /></S></TrayCell>
              </Tray>
            </Taskbar>
            <Banner>
              <PauseBars />
              meet.google.com sta condividendo il tuo schermo.
              <StopButton>Interrompi condivisione</StopButton>
              <HideLink>Nascondi</HideLink>
            </Banner>
          </PaintWindow>
        </LeftColumn>
        <RightColumn>
          <TopSpacer />
          <Sidebar>
            <Tile>
              <Avatar $size={144} $bg="#ec407a" $font={78}><AvatarLetter>L</AvatarLetter></Avatar>
              <NameTag>
                <TagIcon><Dots $gap={3}><Dot $s={5} $c="#5eeac8" /><Dot $s={5} $c="#5eeac8" /><Dot $s={5} $c="#5eeac8" /></Dots></TagIcon>
                Lorenzo Pamio
              </NameTag>
            </Tile>
            <Tile>
              <Avatar $size={144} $bg="#bf360c" $font={78}><AvatarLetter>L</AvatarLetter></Avatar>
              <NameTag>
                <TagIcon $bg="#d93025"><MdMicOff size={20} color="#fff" /></TagIcon>
                Lihuan Lin
              </NameTag>
            </Tile>
            <Tile>
              <Avatar $size={144} $bg="#512da8" $font={78}>A</Avatar>
            </Tile>
          </Sidebar>
        </RightColumn>
      </Stage>
      <BottomBar>
        <Details>Dettagli riunione <MdExpandLess size={34} color="#3c4043" /></Details>
        <Controls>
          <RoundControl $c="#5f6368"><MdMicNone size={32} /></RoundControl>
          <RoundControl $c="#d93025"><MdCallEnd size={32} /></RoundControl>
          <RoundControl $bg="#d93025" $c="#fff"><MdOutlineVideocamOff size={32} /></RoundControl>
        </Controls>
        <PresentBlock>
          <PresentIcon><MdArrowUpward size={15} /></PresentIcon>
          Alice Bussolera<br />sta presentando
        </PresentBlock>
        <MenuSlot><MdMoreVert size={28} /></MenuSlot>
      </BottomBar>
      <TopOverlay>
        <PeoplePill>
          <Avatar $size={40} $bg="#783369" $fg="#c9c9c9" $font={22}>A</Avatar>
          <PillLines>
            Andrea <GhostWrap><Ghost>Dalla Fr...</Ghost><Ghost $sp={.3}>Da Vre...</Ghost></GhostWrap><br />
            e altre 34 perso...
          </PillLines>
        </PeoplePill>
        <ToolPanel>
          <PanelWhite>
            <MdOutlinePeopleAlt size={29} />
            <PeopleCount>40</PeopleCount>
            <PanelDivider />
            <ChatSlot><MdOutlineChat size={30} /></ChatSlot>
          </PanelWhite>
          <PanelSelf>
            <SelfLabel>Tu</SelfLabel>
            <SelfAvatarSlot><Avatar $size={37} $bg="#455a64" $font={20}>d</Avatar></SelfAvatarSlot>
            <Dots $gap={2.5} $self="flex-end" $m="0 0 10px 11px"><Dot $s={5} $c="#00bfa5" /><Dot $s={5} $c="#00bfa5" /><Dot $s={5} $c="#00bfa5" /></Dots>
          </PanelSelf>
        </ToolPanel>
      </TopOverlay>
    </Shell>
  );
}
